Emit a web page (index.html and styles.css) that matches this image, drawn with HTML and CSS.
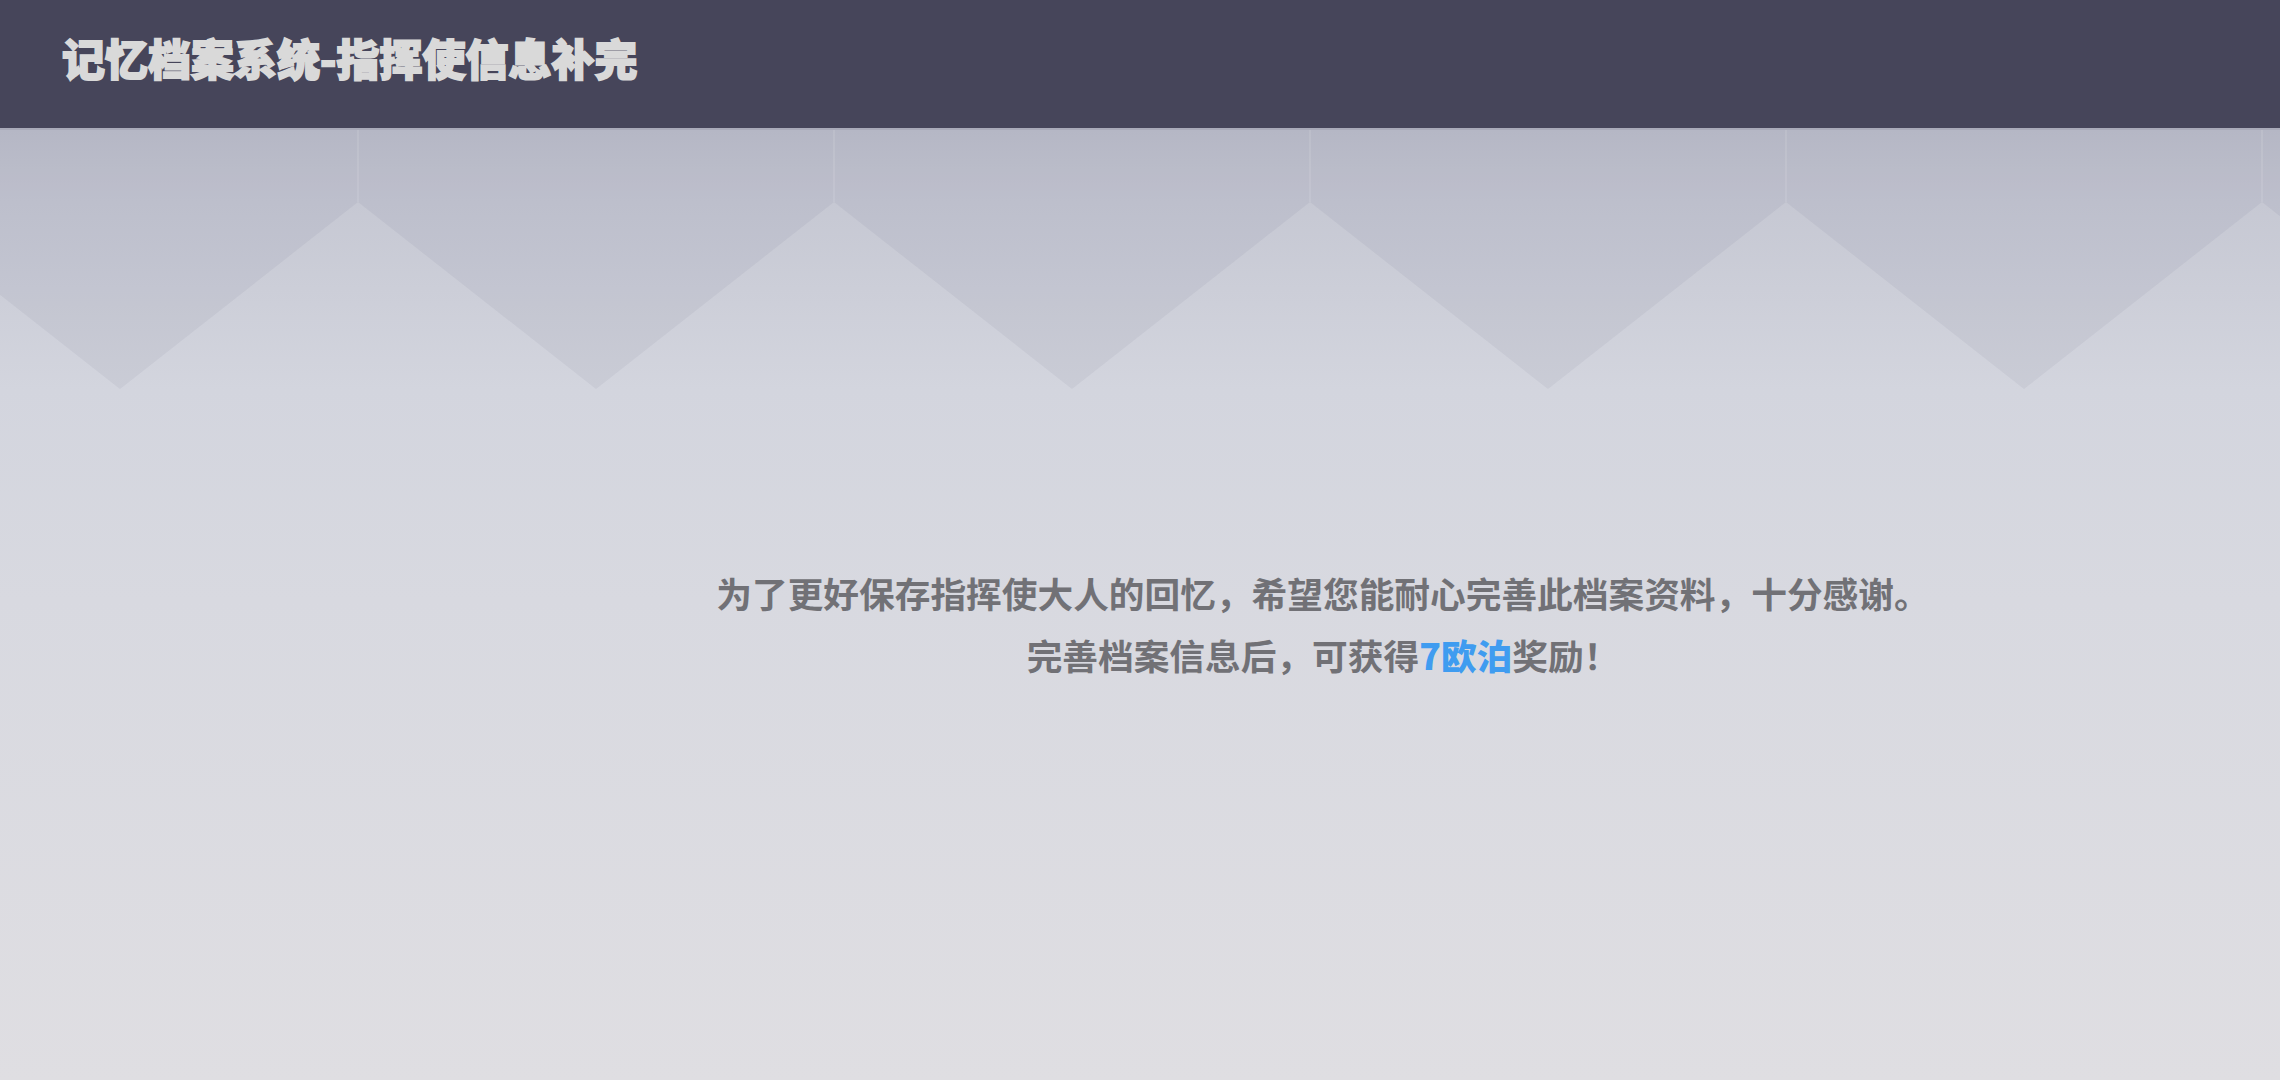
FILE: index.html
```html
<!DOCTYPE html>
<html lang="zh-CN">
<head>
<meta charset="utf-8">
<title>记忆档案系统-指挥使信息补完</title>
<link rel="stylesheet" href="styles.css">
</head>
<body>
<div class="page">
  <header class="topbar">
    <h1 class="title">记忆档案系统-指挥使信息补完</h1>
  </header>
  <main class="stage">
    <svg class="zigzag" viewBox="0 0 2280 300" preserveAspectRatio="none" aria-hidden="true">
      <polygon class="zig-dark" points="-118,72 120,259 358,72 596,259 834,72 1072,259 1310,72 1548,259 1786,72 2024,259 2262,72 2500,259 2500,0 -118,0"/>
      <g class="zig-lines">
        <line x1="358" y1="0" x2="358" y2="72"/>
        <line x1="834" y1="0" x2="834" y2="72"/>
        <line x1="1310" y1="0" x2="1310" y2="72"/>
        <line x1="1786" y1="0" x2="1786" y2="72"/>
        <line x1="2262" y1="0" x2="2262" y2="72"/>
      </g>
    </svg>
    <section class="notice">
      <p class="line">为了更好保存指挥使大人的回忆，希望您能耐心完善此档案资料，十分感谢。</p>
      <p class="line">完善档案信息后，可获得<span class="reward">7欧泊</span>奖励！</p>
    </section>
  </main>
</div>
</body>
</html>
```
FILE: styles.css
```css
html, body {
  margin: 0;
  padding: 0;
  width: 100%;
  height: 100%;
  overflow: hidden;
}
body {
  font-family: "Noto Sans CJK SC", "Noto Sans", sans-serif;
}
.page {
  display: flex;
  flex-direction: column;
  height: 1080px;
}
.topbar {
  height: 128px;
  flex: 0 0 128px;
  background: #46455a;
  display: flex;
  align-items: center;
  padding-left: 62px;
  box-sizing: border-box;
}
.title {
  margin: 0 0 14px 0;
  font-size: 43px;
  font-weight: 900;
  color: #d9d9d9;
  -webkit-text-stroke: 1.8px #d9d9d9;
  letter-spacing: 0;
  line-height: 1;
}
.stage {
  position: relative;
  flex: 1 1 auto;
  background: linear-gradient(to bottom,
    #bdbfcc 0px,
    #c6c8d3 72px,
    #d3d5de 260px,
    #d8d9e0 470px,
    #dfdee2 952px);
  border-top: 2px solid #a9aab9;
  box-sizing: border-box;
  display: flex;
  flex-direction: column;
  align-items: center;
  padding-top: 432px;
  padding-left: 366px;
}
.zigzag {
  position: absolute;
  left: 0;
  top: 0;
  width: 100%;
  height: 300px;
}
.zig-dark {
  fill: rgba(40, 40, 75, 0.05);
}
.zig-lines line {
  stroke: rgba(255, 255, 255, 0.10);
  stroke-width: 2;
}
.notice {
  position: relative;
  text-align: center;
}
.line {
  margin: 0;
  font-size: 35.7px;
  line-height: 62px;
  font-weight: 700;
  color: #717176;
}
.reward {
  color: #3f9cf0;
  font-weight: 900;
}
```
